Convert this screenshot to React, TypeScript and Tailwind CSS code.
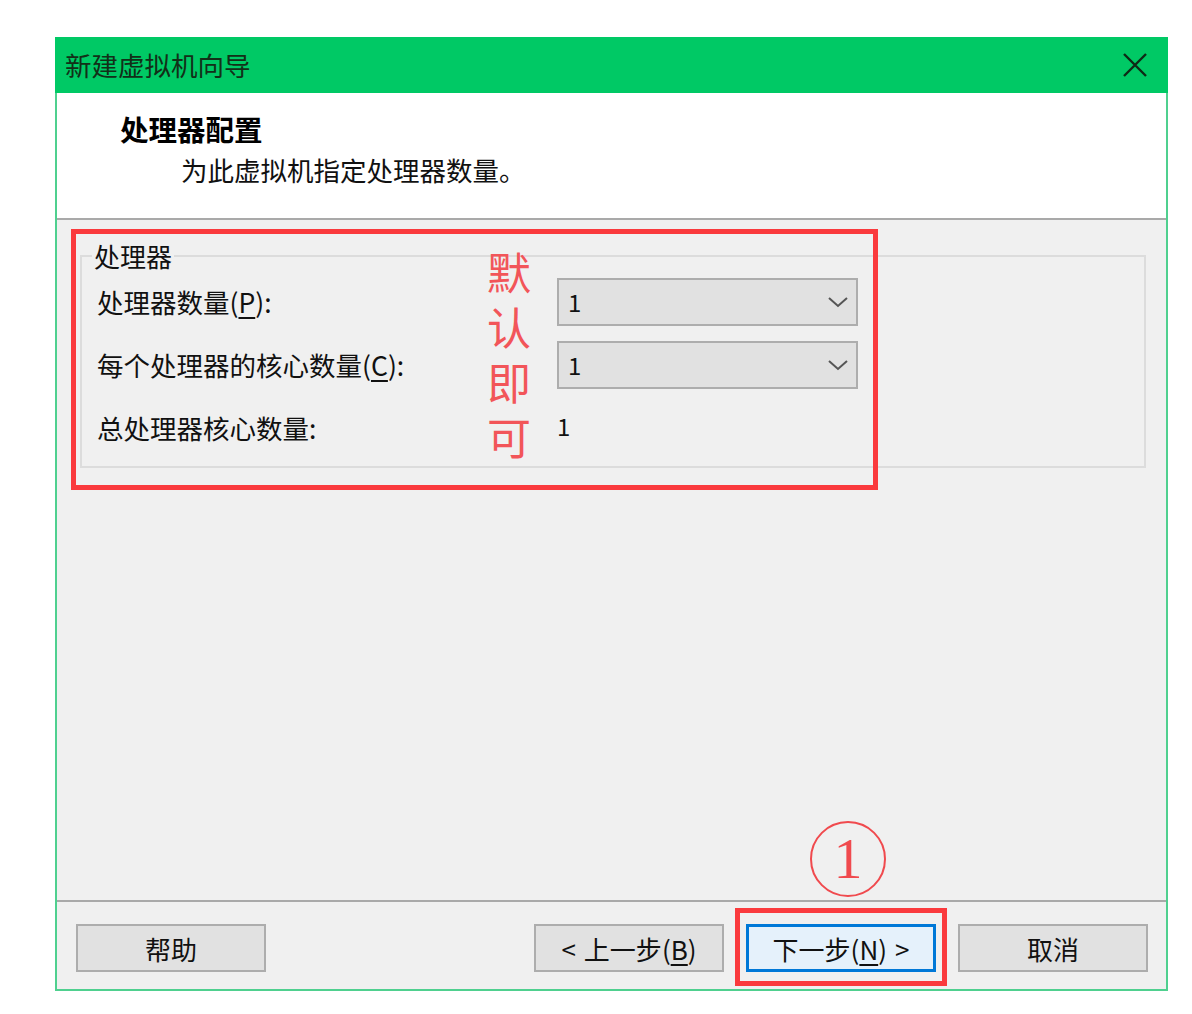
import React from 'react';

const font = { fontFamily: '"Noto Sans CJK SC", "Noto Sans", sans-serif' };

function Mnemonic({ before, letter, after }: { before: string; letter: string; after: string }) {
  return (
    <span>
      {before}(<span className="underline underline-offset-[4px] decoration-[1.5px]">{letter}</span>){after}
    </span>
  );
}

function Combo({ value }: { value: string }) {
  return (
    <div className="w-[301px] h-[48px] bg-[#e1e1e1] border-2 border-[#adadad] flex items-center justify-between pl-[9px] pr-[7px]">
      <span className="text-[24px] text-[#111]">{value}</span>
      <svg width="22" height="12" viewBox="0 0 22 12" fill="none">
        <path d="M2 2 L11 10 L20 2" stroke="#555" strokeWidth="2" />
      </svg>
    </div>
  );
}

function Button({ children, focused = false }: { children: React.ReactNode; focused?: boolean }) {
  return (
    <div
      className={`w-[190px] h-[48px] flex items-center justify-center text-[26px] text-[#111] ${
        focused ? 'bg-[#e5f1fb] border-[3px] border-[#0078d7]' : 'bg-[#e1e1e1] border-2 border-[#adadad]'
      }`}
    >
      {children}
    </div>
  );
}

export default function App() {
  return (
    <div className="w-[1192px] h-[1014px] bg-white pt-[37px] pl-[55px]" style={font}>
      <div className="w-[1113px] h-[954px] flex flex-col border-x-2 border-b-2 border-[#4fd08f]">
        {/* title bar */}
        <div className="h-[56px] -mx-[2px] bg-[#00c965] flex items-center justify-between pl-[10px] pr-[20px]">
          <span className="text-[26.5px] text-[#123018] leading-none">新建虚拟机向导</span>
          <svg width="26" height="26" viewBox="0 0 26 26">
            <path d="M2 2 L24 24 M24 2 L2 24" stroke="#0d2a16" strokeWidth="2.4" />
          </svg>
        </div>

        {/* header */}
        <div className="h-[127px] bg-white border-b-2 border-[#a9a9a9] pl-[63px]">
          <div className="mt-[18px] leading-[36px] text-[28.5px] font-bold text-black">处理器配置</div>
          <div className="mt-[5px] pl-[61px] leading-[36px] text-[26.5px] text-[#111]">为此虚拟机指定处理器数量。</div>
        </div>

        {/* body */}
        <div className="flex-1 bg-[#f0f0f0] relative">
          <div className="relative ml-[23px] mt-[35px] w-[1066px] border-2 border-[#dcdcdc] pt-[21px] pb-[14px] pl-[15px]">
            <span className="absolute -top-[18px] left-[10px] px-[2px] bg-[#f0f0f0] text-[26px] leading-[34px] text-[#111]">处理器</span>
            <div className="grid grid-cols-[460px_301px] grid-rows-[48px_48px_48px] gap-y-[15px] items-center text-[26.5px] text-[#111]">
              <Mnemonic before="处理器数量" letter="P" after=":" />
              <Combo value="1" />
              <Mnemonic before="每个处理器的核心数量" letter="C" after=":" />
              <Combo value="1" />
              <span>总处理器核心数量:</span>
              <span className="text-[24px] -mt-[5px]">1</span>
            </div>
          </div>

          {/* annotations */}
          <div className="absolute left-[14px] top-[9px] w-[807px] h-[261px] border-[5px] border-[#fa3a3d]" />
          <div className="absolute left-[428px] top-[31px] w-[48px] [writing-mode:vertical-rl] text-[44px] leading-[48px] tracking-[11px] text-[#f25559]">
            默认即可
          </div>
          <div
            className="absolute left-[753px] top-[601px] w-[76px] h-[76px] rounded-full border-2 border-[#f04a4e] flex items-center justify-center text-[58px] leading-none text-[#f04a4e]"
            style={{ fontFamily: '"Liberation Serif", serif' }}
          >
            1
          </div>
        </div>

        {/* footer */}
        <div className="relative h-[89px] bg-[#f0f0f0] border-t-2 border-[#a9a9a9] flex items-start pt-[22px] pl-[19px] pr-[18px]">
          <Button>帮助</Button>
          <div className="flex-1" />
          <div className="flex gap-[22px]">
            <Button>
              <span className="mr-[8px]">&lt;</span>
              <Mnemonic before="上一步" letter="B" after="" />
            </Button>
            <Button focused>
              <Mnemonic before="下一步" letter="N" after="" />
              <span className="ml-[8px]">&gt;</span>
            </Button>
            <Button>取消</Button>
          </div>
          <div className="absolute left-[678px] top-[6px] w-[212px] h-[78px] border-[5px] border-[#fa3a3d]" />
        </div>
      </div>
    </div>
  );
}
